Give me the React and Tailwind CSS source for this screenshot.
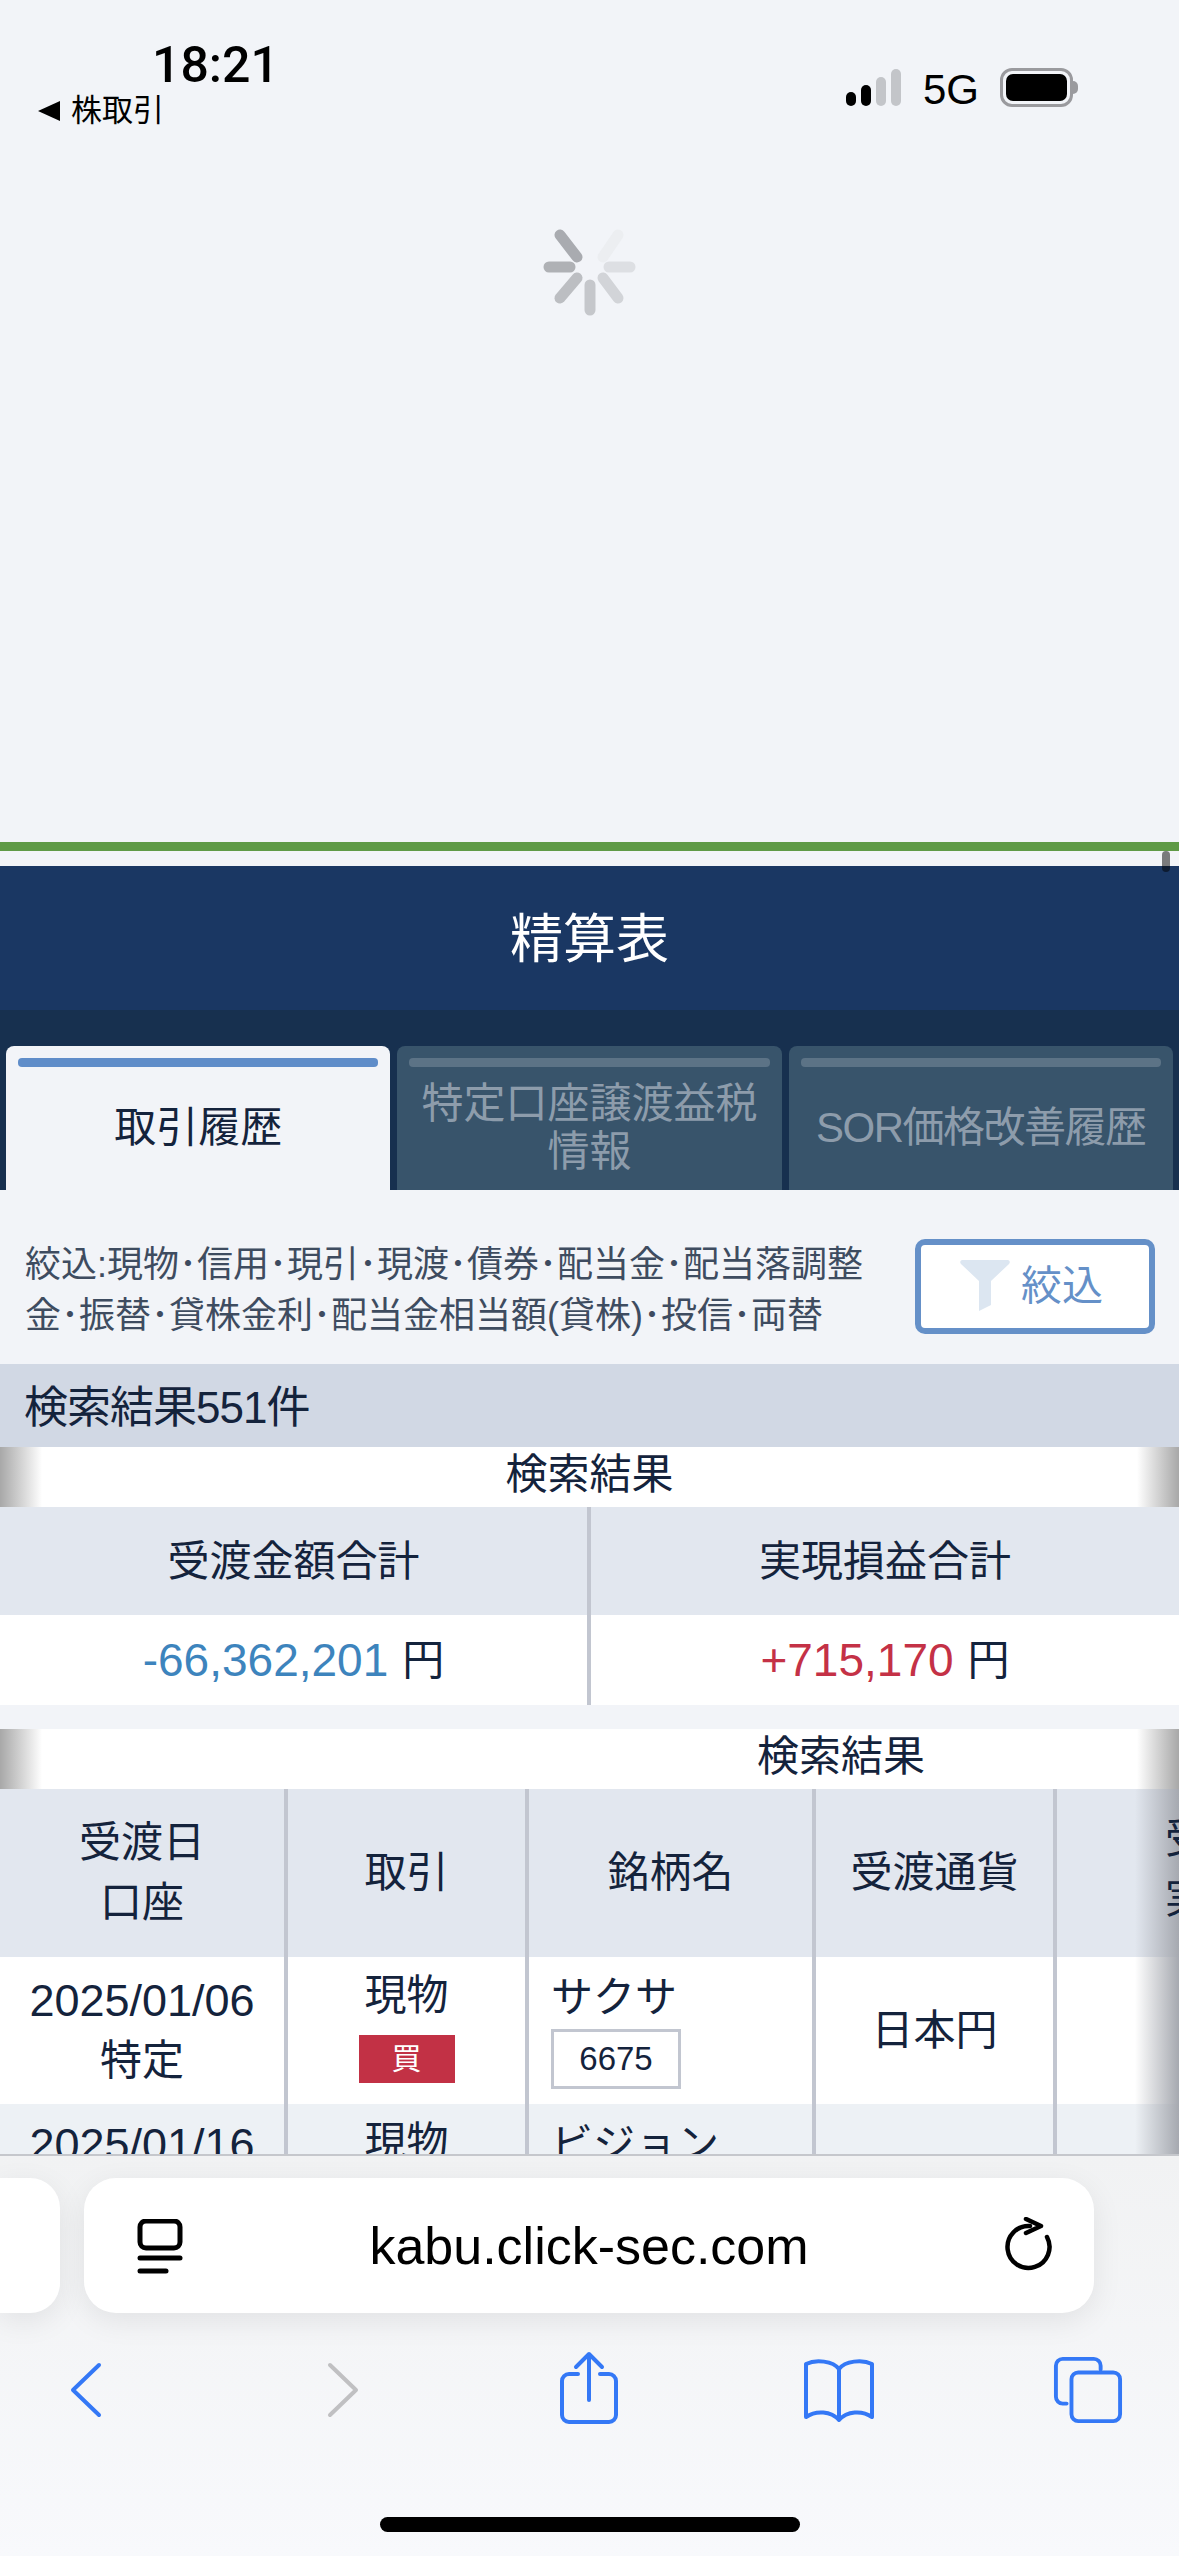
const cjk = "font-['Liberation_Sans','Noto_Sans_CJK_JP',sans-serif]";

function Spinner() {
  const spokes = [
    [560, 235, 577, 257, "#a9abb0"],
    [618, 235, 603, 257, "#eceef1"],
    [549, 267, 570, 267, "#afb1b5"],
    [609, 267, 630, 267, "#dddfe3"],
    [577, 278, 560, 298, "#bcbec2"],
    [590, 285, 590, 310, "#c5c7cb"],
    [603, 278, 618, 298, "#d2d4d8"],
  ];
  return (
    <svg className="absolute left-[540px] top-[225px]" width="100" height="95" viewBox="540 225 100 95">
      {spokes.map(([x1, y1, x2, y2, c], i) => (
        <line key={i} x1={x1} y1={y1} x2={x2} y2={y2} stroke={c} strokeWidth="11" strokeLinecap="round" />
      ))}
    </svg>
  );
}

function StatusBar() {
  return (
    <div className="relative h-[842px]">
      <div className="absolute left-[152px] top-[34px] font-['Roboto',sans-serif] text-[50px] leading-[62px] font-medium text-black">18:21</div>
      <div className="absolute left-[38px] top-[90px] flex items-center gap-[11px]">
        <div className="w-0 h-0 border-y-[10px] border-y-transparent border-r-[22px] border-r-black" />
        <span className="text-[31px] leading-[42px] text-black">株取引</span>
      </div>
      <div className="absolute left-[846px] top-[69px] flex items-end gap-[5px]">
        <div className="w-[10px] h-[14px] rounded-full bg-black" />
        <div className="w-[10px] h-[21px] rounded-full bg-black" />
        <div className="w-[10px] h-[29px] rounded-full bg-[#c3c5c9]" />
        <div className="w-[10px] h-[37px] rounded-full bg-[#c3c5c9]" />
      </div>
      <div className="absolute left-[923px] top-[64px] text-[42px] leading-[52px] text-black">5G</div>
      <div className="absolute left-[1000px] top-[68px] flex items-center">
        <div className="w-[73px] h-[39px] rounded-[12px] border-[3px] border-[#9a9a9e] p-[3px]">
          <div className="w-full h-full rounded-[7px] bg-black" />
        </div>
        <div className="w-[5px] h-[13px] rounded-r-full bg-[#9a9a9e]" />
      </div>
      <Spinner />
    </div>
  );
}

function Tab({active, className = "", children}) {
  return (
    <div className={`flex-1 h-full rounded-t-[8px] px-[12px] pt-[12px] flex flex-col ${active ? "bg-[#f2f4f8] text-[#14233c]" : "bg-[#38546b] text-[#8d9cab]"}`}>
      <div className={`h-[9px] rounded-[4px] shrink-0 ${active ? "bg-[#5f8dc9]" : "bg-[#5c7386]"}`} />
      <div className={`flex-1 flex items-center justify-center text-center text-[42px] leading-[48px] ${className}`}>{children}</div>
    </div>
  );
}

function Caption({children, offset}) {
  return (
    <div className="relative h-[60px] bg-white text-[42px] leading-[56px] text-[#14233c] text-center overflow-hidden">
      <div className="absolute inset-y-0 left-0 w-[42px] bg-gradient-to-r from-[#a8a8a8] to-white" />
      <div className="absolute inset-y-0 right-0 w-[42px] bg-gradient-to-l from-[#a8a8a8] to-white" />
      <div className={`relative ${offset ? "pl-[503px]" : ""}`}>{children}</div>
    </div>
  );
}

function Summary() {
  return (
    <div className="grid grid-cols-[591px_588px] text-[#14233c]">
      <div className="h-[108px] bg-[#e2e7ef] border-r-[4px] border-[#c2c6d0] flex items-center justify-center text-[42px]">受渡金額合計</div>
      <div className="h-[108px] bg-[#e2e7ef] flex items-center justify-center text-[42px]">実現損益合計</div>
      <div className="h-[90px] bg-white border-r-[4px] border-[#c2c6d0] flex items-center justify-center gap-[14px] text-[42px]">
        <span className="text-[46px] text-[#3d84bd]">-66,362,201</span>円
      </div>
      <div className="h-[90px] bg-white flex items-center justify-center gap-[14px] text-[42px]">
        <span className="text-[46px] text-[#c43146]">+715,170</span>円
      </div>
    </div>
  );
}

const cols = ["w-[288px]", "w-[241px]", "w-[287px]", "w-[241px]", "w-[122px]"];

function Cell({i, bg, className = "", children}) {
  return (
    <div className={`${cols[i]} shrink-0 ${i < 4 ? "border-r-[4px] border-[#c2c6d0]" : ""} ${bg} ${className}`}>{children}</div>
  );
}

function Trades() {
  const center = "flex flex-col items-center justify-center text-center";
  return (
    <div className="relative text-[42px] leading-[60px] text-[#14233c] overflow-hidden">
      <div className="flex h-[168px]">
        <Cell i={0} bg="bg-[#e2e7ef]" className={center}>受渡日<br />口座</Cell>
        <Cell i={1} bg="bg-[#e2e7ef]" className={center}>取引</Cell>
        <Cell i={2} bg="bg-[#e2e7ef]" className={center}>銘柄名</Cell>
        <Cell i={3} bg="bg-[#e2e7ef]" className={center}>受渡通貨</Cell>
        <Cell i={4} bg="bg-[#e2e7ef]" />
      </div>
      <div className="flex h-[147px]">
        <Cell i={0} bg="bg-white" className={center}>
          <span className="text-[45px]">2025/01/06</span>
          特定
        </Cell>
        <Cell i={1} bg="bg-white" className="flex flex-col items-center pt-[10px] text-center">
          <div className="leading-[58px]">現物</div>
          <div className="w-[96px] h-[48px] mt-[10px] bg-[#c23145] text-white text-[30px] leading-[48px]">買</div>
        </Cell>
        <Cell i={2} bg="bg-white" className="pl-[22px] pt-[10px]">
          <div className="leading-[62px]">サクサ</div>
          <div className="w-[130px] h-[60px] border-[3px] border-[#c2c6d0] text-[33px] leading-[54px] text-center">6675</div>
        </Cell>
        <Cell i={3} bg="bg-white" className={center}>日本円</Cell>
        <Cell i={4} bg="bg-white" />
      </div>
      <div className="flex h-[50px]">
        <Cell i={0} bg="bg-[#edf1f5]" className="text-center pt-[11px] text-[45px]">2025/01/16</Cell>
        <Cell i={1} bg="bg-[#edf1f5]" className="text-center pt-[10px] leading-[58px]">現物</Cell>
        <Cell i={2} bg="bg-[#edf1f5]" className="pl-[22px] pt-[10px] leading-[62px]">ビジョン</Cell>
        <Cell i={3} bg="bg-[#edf1f5]" />
        <Cell i={4} bg="bg-[#edf1f5]" />
      </div>
      <div className="absolute inset-y-0 right-0 w-[44px] bg-gradient-to-l from-[#a6a9b0] to-transparent" />
      {/* next column, only its first letters show before the edge */}
      <div className="absolute left-[1165px] top-[20px]">受<br />実</div>
    </div>
  );
}

function ToolIcon({x, w, h, top, children, viewBox}) {
  return (
    <svg className="absolute" style={{left: x, top}} width={w} height={h} viewBox={viewBox} fill="none" stroke="#3478f6" strokeWidth="4" strokeLinecap="round" strokeLinejoin="round">
      {children}
    </svg>
  );
}

function Toolbar() {
  return (
    <div className="relative h-[402px] border-t-[2px] border-[#c5c7cc] bg-gradient-to-b from-[#f1f2f3] to-[#f8f9fc]">
      <div className="absolute left-0 top-[22px] w-[60px] h-[135px] rounded-r-[30px] bg-white shadow-[0_8px_30px_rgba(0,0,0,0.08)]" />
      <div className="absolute left-[84px] top-[22px] w-[1010px] h-[135px] rounded-[32px] bg-white shadow-[0_8px_30px_rgba(0,0,0,0.08)] flex items-center justify-center text-[52px] text-black">
        kabu.click-sec.com
        <svg className="absolute left-[53px] top-[41px]" width="46" height="56" viewBox="0 0 46 56" fill="none" stroke="black" strokeWidth="5" strokeLinecap="round">
          <rect x="3" y="2" width="40" height="27" rx="6" />
          <line x1="3" y1="39" x2="43" y2="39" />
          <line x1="3" y1="52" x2="29" y2="52" />
        </svg>
        <svg className="absolute left-[921px] top-[39px]" width="48" height="56" viewBox="0 0 48 56" fill="none" stroke="black" strokeWidth="4.5" strokeLinecap="round" strokeLinejoin="round">
          <path d="M25 9 A21 21 0 1 0 42 20" />
          <path d="M21 2 L36 9 L21 16" />
        </svg>
      </div>
      <ToolIcon x={70} top={206} w={32} h={56} viewBox="0 0 32 56">
        <path d="M29 3 L3 28 L29 53" />
      </ToolIcon>
      <svg className="absolute left-[327px] top-[206px]" width="32" height="56" viewBox="0 0 32 56" fill="none" stroke="#c0c0c2" strokeWidth="4" strokeLinecap="round" strokeLinejoin="round">
        <path d="M3 3 L29 28 L3 53" />
      </svg>
      <ToolIcon x={559} top={195} w={60} h={74} viewBox="0 0 60 74">
        <path d="M19 23 H10 A7 7 0 0 0 3 30 V64 A7 7 0 0 0 10 71 H50 A7 7 0 0 0 57 64 V30 A7 7 0 0 0 50 23 H41" />
        <path d="M30 49 V3 M17 16 L30 3 L43 16" />
      </ToolIcon>
      <ToolIcon x={802} top={202} w={74} h={64} viewBox="0 0 74 64">
        <path d="M37 11 C31 3 14 1 4 6 V59 C14 52 29 53 37 62 C45 53 60 52 70 59 V6 C60 1 43 3 37 11 Z M37 11 V62" />
      </ToolIcon>
      <ToolIcon x={1053} top={199} w={70} h={70} viewBox="0 0 72 70">
        <path d="M14 49 H10 A7 7 0 0 1 3 42 V10 A7 7 0 0 1 10 3 H42 A7 7 0 0 1 49 10 V14" />
        <rect x="19" y="17" width="50" height="50" rx="7" />
      </ToolIcon>
      <div className="absolute left-[380px] top-[361px] w-[420px] h-[15px] rounded-full bg-black" />
    </div>
  );
}

export default function App() {
  return (
    <div className={`relative w-[1179px] h-[2556px] overflow-hidden bg-[#f2f4f8] flex flex-col ${cjk}`}>
      <StatusBar />
      <div className="h-[9px] bg-[#5f9a46]" />
      <div className="h-[15px]" />
      <div className="h-[144px] bg-[#1a3763] flex items-center justify-center pt-[4px] text-[53px] text-white">精算表</div>
      <div className="h-[180px] bg-[#17304f] flex items-end px-[6px]">
        <div className="flex gap-[7px] w-full h-[144px]">
          <Tab active>取引履歴</Tab>
          <Tab>特定口座譲渡益税<br />情報</Tab>
          <Tab className="tracking-[-1.5px]">SOR価格改善履歴</Tab>
        </div>
      </div>
      <div className="relative h-[175px] flex items-center justify-between pl-[25px] pr-[24px]">
        <p className="pt-[27px] text-[36px] leading-[51px] text-[#3e4c60] whitespace-nowrap">
          絞込:現物･信用･現引･現渡･債券･配当金･配当落調整<br />
          金･振替･貸株金利･配当金相当額(貸株)･投信･両替
        </p>
        <div className="mt-[19px] w-[240px] h-[95px] pr-[7px] border-[6px] border-[#6590c8] rounded-[10px] bg-white flex items-center justify-center gap-[11px] text-[#6590c8] text-[41px]">
          <svg width="50" height="52" viewBox="0 0 50 52"><path d="M2 0 H48 Q51 1 49 4 L31 21 V45 L19 51 V21 L1 4 Q-1 1 2 0 Z" fill="#dce6f1" /></svg>
          絞込
        </div>
      </div>
      <div className="h-[83px] bg-[#d1d8e4] flex items-center pt-[4px] pl-[24px] text-[44px] text-[#14233c] tracking-[-1px]">検索結果551件</div>
      <Caption>検索結果</Caption>
      <Summary />
      <div className="h-[24px]" />
      <Caption offset>検索結果</Caption>
      <Trades />
      <Toolbar />
      {/* page scroll indicator */}
      <div className="absolute left-[1162px] top-[851px] w-[8px] h-[21px] rounded-full bg-black/50" />
    </div>
  );
}
